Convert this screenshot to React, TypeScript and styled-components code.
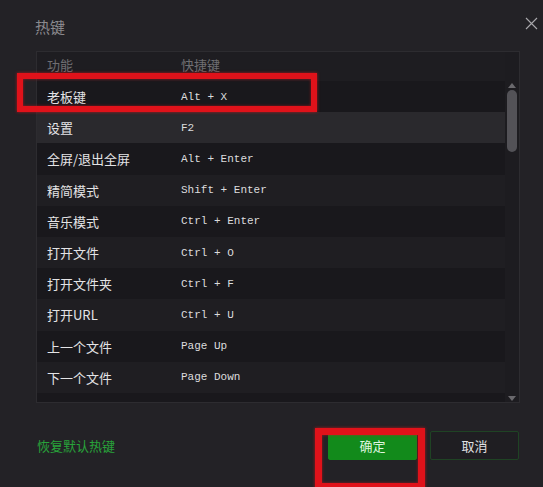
import React from "react";
import styled, { createGlobalStyle } from "styled-components";

const Global = createGlobalStyle`
  html, body { margin: 0; padding: 0; background: #232226; }
  body { width: 543px; height: 487px; overflow: hidden; }
  * { box-sizing: border-box; }
`;

const CJK = `"Noto Sans CJK SC", "Noto Sans", sans-serif`;

const Dialog = styled.div`
  position: relative;
  width: 543px;
  height: 487px;
  background: #232226;
  font-family: ${CJK};
  display: flex;
  flex-direction: column;
  overflow: hidden;
`;

const TitleBar = styled.div`
  display: flex;
  justify-content: space-between;
  align-items: flex-start;
  height: 51px;
  padding: 17px 4px 0 35px;
`;

const Title = styled.div`
  font-size: 15px;
  line-height: 20px;
  color: #8b8a8e;
`;

const Close = styled.button`
  background: none;
  border: none;
  padding: 0;
  width: 14px;
  height: 14px;
  display: flex;
  cursor: pointer;
`;

const TableBox = styled.div`
  margin-left: 36px;
  width: 484px;
  height: 352px;
  border: 1px solid #2d2c30;
  background: #1d1c20;
  display: flex;
  overflow: hidden;
`;

const TableMain = styled.div`
  flex: 1;
  display: flex;
  flex-direction: column;
  overflow: hidden;
`;

const HeaderRow = styled.div`
  display: flex;
  align-items: center;
  height: 29px;
  flex-shrink: 0;
  padding: 0 0 5px 10px;
  font-size: 13px;
  color: #6f6e72;
  background: #1e1d21;
`;

const Rows = styled.div`
  flex: 1;
  overflow: hidden;
`;

const Row = styled.div<{ $tone: "dark" | "light" | "sel" }>`
  display: flex;
  align-items: center;
  height: 31.2px;
  padding-left: 10px;
  background: ${(p) =>
    p.$tone === "sel" ? "#2a292d" : p.$tone === "dark" ? "#19181c" : "#1f1e22"};
`;

const Func = styled.div`
  width: 134px;
  flex-shrink: 0;
  font-size: 13px;
  color: #e4e4e6;
  white-space: nowrap;
`;

const HeadCell = styled.div`
  width: 134px;
  flex-shrink: 0;
`;

const Keys = styled.div`
  font-family: "Liberation Mono", "DejaVu Sans Mono", monospace;
  font-size: 11px;
  color: #dcdcde;
  white-space: pre;
`;

const ScrollTrack = styled.div`
  width: 14px;
  flex-shrink: 0;
  display: flex;
  flex-direction: column;
  align-items: center;
  padding-top: 29px;
  background: #1d1c20;
`;

const Arrow = styled.div<{ $down?: boolean }>`
  width: 0;
  height: 0;
  border-left: 4px solid transparent;
  border-right: 4px solid transparent;
  ${(p) =>
    p.$down
      ? "border-top: 5px solid #6a696d; margin-top: auto; margin-bottom: 1px;"
      : "border-bottom: 5px solid #6a696d; margin-top: 2px;"}
`;

const Thumb = styled.div`
  width: 10px;
  height: 62px;
  margin-top: 2px;
  border-radius: 5px;
  background: #535257;
`;

const Footer = styled.div`
  flex: 1;
  display: flex;
  align-items: center;
  padding: 0 24px 0 37px;
  gap: 13px;
`;

const ResetLink = styled.a`
  font-size: 13px;
  color: #28a23a;
  margin-right: auto;
  cursor: pointer;
`;

const Btn = styled.button<{ $primary?: boolean }>`
  width: 89px;
  height: 29px;
  font-family: ${CJK};
  font-size: 13px;
  border-radius: 2px;
  cursor: pointer;
  background: ${(p) => (p.$primary ? "#128a1b" : "#1f1e22")};
  color: ${(p) => (p.$primary ? "#dff5df" : "#e0e0e2")};
  border: 1px solid ${(p) => (p.$primary ? "#128a1b" : "#1f4324")};
`;

const Mark = styled.div<{ $x: number; $y: number; $w: number; $h: number; $t: number }>`
  position: absolute;
  left: ${(p) => p.$x}px;
  top: ${(p) => p.$y}px;
  width: ${(p) => p.$w}px;
  height: ${(p) => p.$h}px;
  border: ${(p) => p.$t}px solid #e0121a;
  box-shadow: 0 0 3px rgba(230, 20, 26, 0.7), inset 0 0 3px rgba(230, 20, 26, 0.6);
  pointer-events: none;
`;

const data: [string, string][] = [
  ["老板键", "Alt + X"],
  ["设置", "F2"],
  ["全屏/退出全屏", "Alt + Enter"],
  ["精简模式", "Shift + Enter"],
  ["音乐模式", "Ctrl + Enter"],
  ["打开文件", "Ctrl + O"],
  ["打开文件夹", "Ctrl + F"],
  ["打开URL", "Ctrl + U"],
  ["上一个文件", "Page Up"],
  ["下一个文件", "Page Down"],
  ["音量增加", "Up"],
];

export default function App() {
  return (
    <>
      <Global />
      <Dialog>
        <TitleBar>
          <Title>热键</Title>
          <Close aria-label="close">
            <svg width="13" height="13" viewBox="0 0 13 13">
              <path d="M1 1L12 12M12 1L1 12" stroke="#a9a8ac" strokeWidth="1.1" fill="none" />
            </svg>
          </Close>
        </TitleBar>
        <TableBox>
          <TableMain>
            <HeaderRow>
              <HeadCell>功能</HeadCell>
              <div>快捷键</div>
            </HeaderRow>
            <Rows>
              {data.map(([f, k], i) => (
                <Row key={f} $tone={i === 1 ? "sel" : i % 2 === 0 ? "dark" : "light"}>
                  <Func>{f}</Func>
                  <Keys>{k}</Keys>
                </Row>
              ))}
            </Rows>
          </TableMain>
          <ScrollTrack>
            <Arrow />
            <Thumb />
            <Arrow $down />
          </ScrollTrack>
        </TableBox>
        <Footer>
          <ResetLink>恢复默认热键</ResetLink>
          <Btn $primary>确定</Btn>
          <Btn>取消</Btn>
        </Footer>
        <Mark $x={17} $y={73} $w={300} $h={39} $t={6} />
        <Mark $x={315} $y={428} $w={110} $h={62} $t={7} />
      </Dialog>
    </>
  );
}
